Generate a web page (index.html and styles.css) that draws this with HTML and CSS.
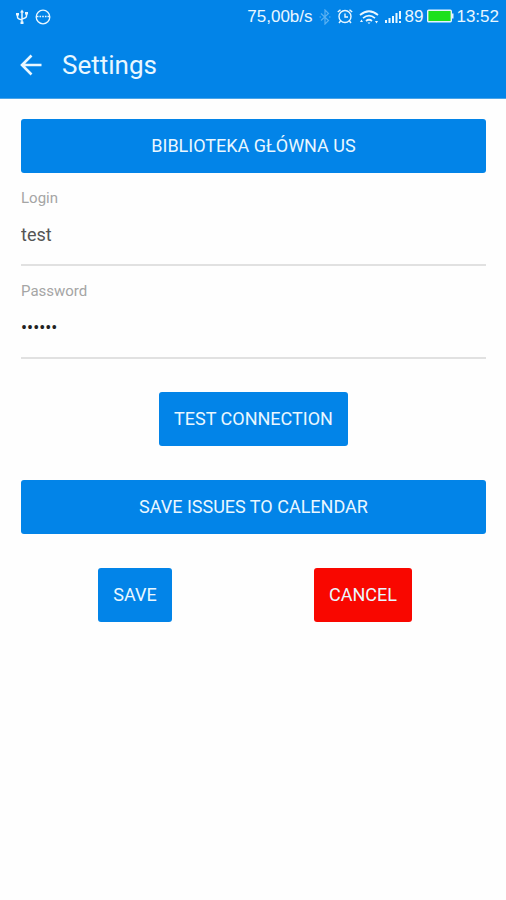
FILE: index.html
```html
<!DOCTYPE html>
<html lang="en">
<head>
<meta charset="utf-8">
<meta name="viewport" content="width=device-width, initial-scale=1">
<title>Settings</title>
<link rel="stylesheet" href="styles.css">
</head>
<body>
<header class="top">
  <div class="status">
    <svg class="icon" width="14" height="16" viewBox="0 0 14 16" fill="none" stroke="currentColor" stroke-width="1.500" aria-hidden="true">
      <path d="M7 2v12M2.500 5v3q0 2 4.500 3M11.500 4v3q0 2-4.500 3"/>
      <path d="M5 3.500 7 .5l2 3zM1 4h3v2.500H1zM10 3h3v2.500h-3zM5.500 12.500h3v2.500h-3z" fill="currentColor" stroke="none"/>
    </svg>
    <svg class="icon" width="16" height="16" viewBox="0 0 16 16" fill="none" stroke="currentColor" stroke-width="1.300" aria-hidden="true">
      <circle cx="8" cy="8" r="6.800"/>
      <path d="M1.500 7.500h2M12.500 7.500h2"/>
      <path d="M4.500 7.500h7" stroke-dasharray="1.600 1.100" stroke-width="1.600"/>
    </svg>
    <span class="speed">75,00b/s</span>
    <svg class="icon dim" width="12" height="16" viewBox="0 0 12 16" fill="none" stroke="currentColor" stroke-width="1.200" aria-hidden="true">
      <path d="M2 4.500 9.500 11.500 6 15V1l3.500 3.500L2 11.500"/>
      <path d="M.5 8h1.500M10 8h1.500"/>
    </svg>
    <svg class="icon" width="16" height="16" viewBox="0 0 16 16" fill="none" stroke="currentColor" stroke-width="1.400" aria-hidden="true">
      <circle cx="8" cy="7.500" r="6"/>
      <path d="M8 4.500v3.500h3M.8 3 3.500 .7M15.200 3 12.500 .7M3.500 12 2 14M12.500 12l1.500 2"/>
    </svg>
    <svg class="icon" width="20" height="16" viewBox="0 0 20 16" fill="none" stroke="currentColor" stroke-width="1.700" aria-hidden="true">
      <path d="M1 6Q10-1.500 19 6M4 9.200q6-5 12 0M7 12q3-2.500 6 0"/>
      <path d="M8.500 13.500h3L10 15zM1 13l1.500-2.500L4 13zM16 12h3l-1.500 2.500z" fill="currentColor" stroke="none"/>
    </svg>
    <svg class="icon signal" width="17" height="16" viewBox="0 0 17 16" fill="currentColor" aria-hidden="true">
      <path d="M0 11h2v3H0zM3.500 9h2v5h-2zM7 7h2v7H7zM10.500 4h2v10h-2zM14 2h2v8h-2zM14 12h2v2h-2z"/>
    </svg>
    <span>89</span>
    <svg class="icon battery" width="27" height="16" viewBox="0 0 27 16" aria-hidden="true">
      <rect x=".7" y="1.200" width="23.600" height="11.600" rx="1" fill="#1de01d" stroke="#e4f3fd" stroke-width="1.400"/>
      <path d="M25 4.500h1.500v5H25z" fill="#e4f3fd"/>
    </svg>
    <span>13:52</span>
  </div>
  <div class="toolbar">
    <button class="back" type="button" aria-label="Back">
      <svg width="22" height="22" viewBox="0 0 22 22" fill="none" stroke="currentColor" stroke-width="2.600" aria-hidden="true">
        <path d="M21.500 11H2.500M11.500 1.500 2 11l9.500 9.500"/>
      </svg>
    </button>
    <h1 class="title">Settings</h1>
  </div>
</header>
<main class="form">
  <button class="btn wide" type="button">BIBLIOTEKA GŁÓWNA US</button>
  <div class="field">
    <label for="login">Login</label>
    <input id="login" type="text" value="test">
  </div>
  <div class="field">
    <label for="password">Password</label>
    <input id="password" class="secret" type="password" value="secret">
  </div>
  <button class="btn test" type="button">TEST CONNECTION</button>
  <button class="btn wide" type="button">SAVE ISSUES TO CALENDAR</button>
  <div class="actions">
    <button class="btn" type="button">SAVE</button>
    <button class="btn cancel" type="button">CANCEL</button>
  </div>
</main>
</body>
</html>
```
FILE: styles.css
```css
* {
  box-sizing: border-box;
}

body {
  margin: 0;
  background: #fefefe;
  font-family: Roboto, "Liberation Sans", sans-serif;
}

.top {
  background: #0284e8;
  color: #e9f7ff;
  border-bottom: 1px solid #4ba5e8;
}

.status {
  display: flex;
  align-items: center;
  gap: 4px;
  height: 33px;
  padding: 0 7px 0 15px;
  font-family: "Liberation Sans", sans-serif;
  font-size: 17px;
}

.icon {
  flex: none;
}

.icon + .icon {
  margin-left: 2px;
}

.speed {
  margin-left: auto;
  margin-right: 2px;
}

.dim {
  color: #59b0f2;
}

.signal {
  margin-right: -1px;
}

.battery {
  margin-right: -2px;
}

.toolbar {
  display: flex;
  align-items: center;
  gap: 20px;
  height: 65px;
  padding: 0 20px 1px;
}

.back {
  display: flex;
  padding: 0;
  border: 0;
  background: none;
  color: inherit;
}

.title {
  margin: 0;
  font-size: 26px;
  font-weight: 400;
}

.form {
  display: flex;
  flex-direction: column;
  padding: 20px 20px 20px 21px;
}

.btn {
  height: 54px;
  padding: 0 15px 2px;
  border: 0;
  border-radius: 3px;
  background: #0284e8;
  color: #e9f7ff;
  font: 400 18px Roboto, "Liberation Sans", sans-serif;
}

.field {
  display: flex;
  flex-direction: column;
  height: 93px;
  padding-top: 15px;
  border-bottom: 2px solid #e1e1e1;
}

.field label {
  color: #a5a5a5;
  font-size: 15px;
  line-height: 20px;
}

.field input {
  width: 100%;
  height: 52px;
  padding: 0;
  border: 0;
  outline: 0;
  background: none;
  color: #555;
  font: 400 18px Roboto, "Liberation Sans", sans-serif;
}

.field .secret {
  color: #222;
}

.test {
  align-self: center;
  margin: 33px 0 34px;
}

.actions {
  display: grid;
  grid-template-columns: 1fr 1fr;
  justify-items: center;
  margin-top: 34px;
  padding-right: 9px;
}

.cancel {
  background: #f90700;
}
```
